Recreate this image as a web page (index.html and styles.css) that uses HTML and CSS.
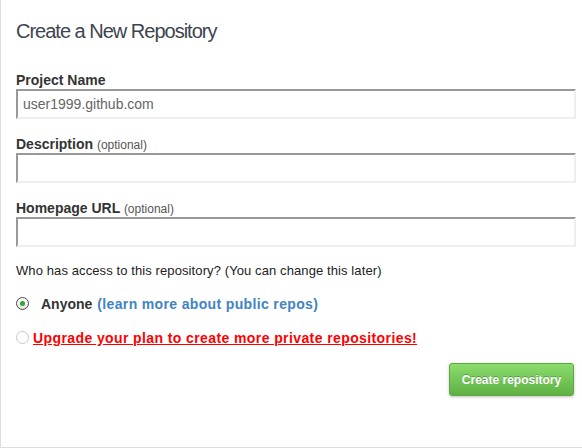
FILE: index.html
```html
<!DOCTYPE html>
<html>
<head>
<meta charset="utf-8">
<link rel="stylesheet" href="styles.css">
</head>
<body>
<div class="page">
  <h1 class="title">Create a New Repository</h1>
  <form class="form">
    <div class="field">
      <label class="label">Project Name</label>
      <div class="input">user1999.github.com</div>
    </div>
    <div class="field">
      <label class="label">Description <span class="opt">(optional)</span></label>
      <div class="input"></div>
    </div>
    <div class="field">
      <label class="label">Homepage URL <span class="opt">(optional)</span></label>
      <div class="input"></div>
    </div>
    <p class="access">Who has access to this repository? (You can change this later)</p>
    <div class="radio-row first">
      <span class="radio checked"><span class="dot"></span></span>
      <span class="anyone">Anyone</span>
      <a class="learn">(learn more about public repos)</a>
    </div>
    <div class="radio-row second">
      <span class="radio"></span>
      <a class="upgrade">Upgrade your plan to create more private repositories!</a>
    </div>
    <div class="actions">
      <button type="button" class="btn">Create repository</button>
    </div>
  </form>
</div>
</body>
</html>
```
FILE: styles.css
```css
html, body {
  margin: 0;
  padding: 0;
  background: #fff;
}
body {
  font-family: "Liberation Sans", Arial, sans-serif;
  color: #333;
}
.page {
  box-sizing: border-box;
  width: 582px;
  height: 448px;
  border-left: 1px solid #ddd;
  border-bottom: 1px solid #ddd;
  padding: 0 6px 0 15px;
}
.title {
  margin: 0;
  padding-top: 18px;
  font-size: 20px;
  line-height: 26px;
  font-weight: normal;
  letter-spacing: -1px;
  color: #3d4450;
}
.form {
  margin-top: 27px;
}
.field {
  margin-bottom: 16px;
}
.label {
  display: block;
  font-size: 14px;
  font-weight: bold;
  line-height: 18px;
  height: 18px;
  color: #333;
}
.opt {
  font-size: 12px;
  line-height: 12px;
  font-weight: normal;
  color: #555;
}
.input {
  box-sizing: border-box;
  height: 30px;
  width: 560px;
  border-style: solid;
  border-width: 2px;
  border-color: #999 #eee #eee #999;
  padding: 0 5px;
  font-size: 14px;
  line-height: 26px;
  color: #666;
}
.access {
  margin: 1px 0 0;
  font-size: 13px;
  line-height: 16px;
  letter-spacing: 0.1px;
  color: #222;
}
.radio-row {
  display: flex;
  align-items: flex-start;
  font-size: 14px;
  font-weight: bold;
  line-height: 18px;
  height: 18px;
}
.radio-row.first {
  margin-top: 16px;
}
.radio-row.second {
  margin-top: 16px;
}
.radio {
  box-sizing: border-box;
  width: 13px;
  height: 13px;
  margin-top: 2px;
  border-radius: 50%;
  border: 1px solid #c8c8c8;
  background: #fff;
  display: flex;
  align-items: center;
  justify-content: center;
}
.radio.checked {
  border-color: #4a4a4a;
  background: linear-gradient(#fff, #e4e4e4);
}
.dot {
  width: 5px;
  height: 5px;
  border-radius: 50%;
  background: #35a335;
}
.anyone {
  margin-left: 12px;
  color: #333;
}
.learn {
  margin-left: 5px;
  color: #4183c4;
  letter-spacing: 0.35px;
}
.upgrade {
  margin-left: 4px;
  color: #f00;
  text-decoration: underline;
  letter-spacing: 0.4px;
}
.actions {
  display: flex;
  justify-content: flex-end;
  margin-top: 16px;
  padding-right: 2px;
}
.btn {
  width: 125px;
  height: 33px;
  border: 1px solid #5ca941;
  border-radius: 3px;
  background: linear-gradient(#8add6d, #60b044);
  color: #fff;
  font-family: "Liberation Sans", Arial, sans-serif;
  font-size: 12px;
  font-weight: bold;
  text-shadow: 0 -1px 0 rgba(0,0,0,0.25);
  box-shadow: 0 1px 3px rgba(0,0,0,0.25);
  padding: 0;
}
```
